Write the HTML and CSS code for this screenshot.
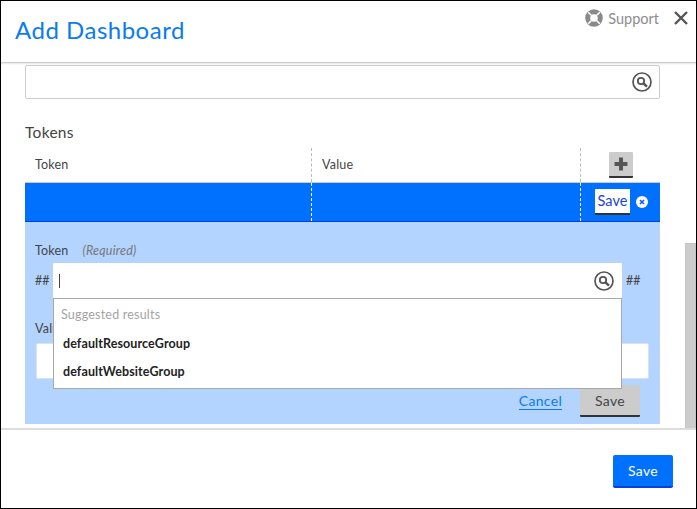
FILE: index.html
```html
<!DOCTYPE html>
<html lang="en">
<head>
<meta charset="utf-8">
<title>Add Dashboard</title>
<link rel="stylesheet" href="styles.css">
</head>
<body>
<div class="dialog">
  <header class="head">
    <h1 class="title">Add Dashboard</h1>
    <div class="head-tools">
      <svg class="buoy" viewBox="0 0 18 18" width="18" height="18" aria-hidden="true">
        <circle cx="9" cy="9" r="6.3" fill="none" stroke="#8a8a8a" stroke-width="5"/>
        <path d="M3.2 3.2 6.2 6.2M14.8 3.2 11.8 6.2M3.2 14.8 6.2 11.8M14.8 14.8 11.8 11.8" stroke="#fff" stroke-width="1.6"/>
      </svg>
      <span class="support">Support</span>
      <svg class="close" viewBox="0 0 16 16" width="16" height="16" aria-hidden="true">
        <path d="M2 2 14 14M14 2 2 14" stroke="#555" stroke-width="2.4" fill="none"/>
      </svg>
    </div>
  </header>

  <main class="body">
    <div class="scrollbar"></div>
    <div class="search-box">
      <svg class="search" viewBox="0 0 20 20" width="20" height="20" aria-hidden="true">
        <circle cx="10" cy="10" r="9" fill="none" stroke="#555" stroke-width="1.7"/>
        <circle cx="9" cy="9" r="3.2" fill="none" stroke="#555" stroke-width="1.8"/>
        <path d="M11.5 11.5 15 14.6" stroke="#555" stroke-width="2.4" fill="none"/>
      </svg>
    </div>
    <h2 class="section">Tokens</h2>
    <div class="table-head">
      <div class="cell cell-token">Token</div>
      <div class="cell cell-value">Value</div>
      <div class="cell cell-add">
        <button class="add-btn" type="button" aria-label="Add">
          <svg viewBox="0 0 12 12" width="14" height="14" aria-hidden="true"><path d="M6 0.5V11.5M0.5 6H11.5" stroke="#555" stroke-width="3.4"/></svg>
        </button>
      </div>
    </div>
    <div class="table-row">
      <div class="cell cell-token"></div>
      <div class="cell cell-value"></div>
      <div class="cell cell-actions">
        <button class="row-save" type="button">Save</button>
        <svg class="row-x" viewBox="0 0 12 12" width="12" height="12" aria-hidden="true">
          <circle cx="6" cy="6" r="6" fill="#fff"/>
          <path d="M4 4 8 8M8 4 4 8" stroke="#1a5ae8" stroke-width="1.6"/>
        </svg>
      </div>
    </div>
    <section class="panel">
      <div class="label-line"><span class="label">Token</span><em class="req">(Required)</em></div>
      <div class="token-line">
        <span class="hash">##</span>
        <div class="token-input">
          <span class="caret"></span>
          <svg class="search" viewBox="0 0 20 20" width="20" height="20" aria-hidden="true">
            <circle cx="10" cy="10" r="9" fill="none" stroke="#555" stroke-width="1.7"/>
            <circle cx="9" cy="9" r="3.2" fill="none" stroke="#555" stroke-width="1.8"/>
            <path d="M11.5 11.5 15 14.6" stroke="#555" stroke-width="2.4" fill="none"/>
          </svg>
          <div class="dropdown">
            <div class="drop-head">Suggested results</div>
            <div class="drop-item">defaultResourceGroup</div>
            <div class="drop-item">defaultWebsiteGroup</div>
          </div>
        </div>
        <span class="hash">##</span>
      </div>
      <div class="label label-value">Value</div>
      <div class="value-input"></div>
      <div class="panel-actions">
        <a class="cancel" href="#">Cancel</a>
        <button class="panel-save" type="button">Save</button>
      </div>
    </section>
  </main>

  <footer class="foot">
    <button class="foot-save" type="button">Save</button>
  </footer>
</div>
</body>
</html>
```
FILE: styles.css
```css
* { box-sizing: border-box; }
html, body { margin: 0; height: 100%; }
body { font-family: Lato, "Open Sans", sans-serif; color: #444; background: #fff; overflow: hidden; }
.dialog { width: 697px; height: 509px; border: 1px solid #000; display: flex; flex-direction: column; background: #fff; }

.head { height: 62px; flex: none; display: flex; justify-content: space-between; align-items: flex-start; border-bottom: 1px solid #ccc; padding-left: 14px; }
.title { margin: 14px 0 0; font-size: 24px; line-height: 30px; font-weight: 400; color: #0a7bf0; letter-spacing: .5px; }
.head-tools { display: flex; align-items: center; height: 18px; margin-top: 8px; padding-right: 7px; }
.support { font-size: 14.5px; color: #8c8c8c; margin: 0 14px 0 5px; letter-spacing: 0; }
.close { display: block; }

.body { position: relative; height: 365px; flex: none; overflow: hidden; padding: 2px 36px 0 24px; box-shadow: inset 0 3px 2px -2px #e4e4e4; }
.scrollbar { position: absolute; right: 0; top: 180px; width: 11px; height: 186px; background: #ccc; border: 1px solid #c4c4c4; }
.search-box { height: 34px; border: 1px solid #ccc; border-radius: 2px; display: flex; align-items: center; justify-content: flex-end; padding-right: 7px; background: #fff; }
.search { display: block; flex: none; }
.section { margin: 23px 0 0; font-size: 15.5px; line-height: 20px; font-weight: 400; color: #444; letter-spacing: .3px; height: 26px; }

.table-head, .table-row { display: grid; grid-template-columns: 287px 269px 79px; }
.table-head { height: 35px; font-size: 12.5px; border-bottom: 1px solid #ccc; }
.cell-token, .cell-value { border-right: 1px dashed #bbb; }
.table-head .cell-token, .table-head .cell-value { padding: 9px 10px 0; line-height: 16px; color: #444; letter-spacing: .2px; }
.cell-add { display: flex; justify-content: center; padding-left: 1px; padding-top: 4px; }
.add-btn { width: 24px; height: 26px; padding: 0; border: 0; border-bottom: 2px solid #333; border-radius: 1px; background: #ccc; display: flex; align-items: center; justify-content: center; }
.table-row { height: 39px; background: #0070ff; border-bottom: 1px solid #0a3fd8; }
.table-row .cell-token, .table-row .cell-value { border-right-color: #fff; }
.cell-actions { display: flex; align-items: center; padding: 0 0 0 14px; gap: 6px; }
.row-save { width: 35px; height: 26px; padding: 0 0 2px; border: 0; border-bottom: 2px solid #333; background: #fff; color: #1a44e0; font: 14.5px Lato, sans-serif; }
.row-x { display: block; }

.panel { height: 202px; background: #b3d4ff; padding: 21px 11px 0; }
.label-line { display: flex; align-items: baseline; height: 20px; margin-left: -1px; font-size: 12.5px; line-height: 16px; }
.label { font-size: 12.5px; color: #444; letter-spacing: .2px; }
.req { font-size: 12.5px; color: #777; margin-left: 14px; letter-spacing: .2px; }
.token-line { display: flex; align-items: center; height: 35px; margin-left: -1px; }
.hash { font-size: 12.5px; color: #444; width: 18px; flex: none; }
.token-line .hash:last-child { margin-left: 4px; }
.token-input { position: relative; width: 569px; height: 35px; background: #fff; border-radius: 1px; box-shadow: 0 0 2px #ccc; display: flex; align-items: center; justify-content: space-between; padding: 0 8px 0 6px; flex: none; }
.caret { width: 1px; height: 14px; background: #444; }
.dropdown { position: absolute; left: 0; top: 35px; width: 569px; height: 91px; background: #fff; border: 1px solid #a8a8a8; padding: 8px 9px 0 9px; z-index: 2; }
.drop-head { font-size: 12.5px; line-height: 16px; color: #a4a4a4; margin-left: -2px; letter-spacing: .2px; }
.drop-item { font-size: 12.5px; line-height: 16px; font-weight: 700; color: #222; margin-top: 12px; letter-spacing: .1px; }
.drop-head + .drop-item { margin-top: 13px; }
.label-value { margin-top: 23px; margin-left: -1px; line-height: 16px; height: 16px; display: block; }
.value-input { width: 613px; height: 36px; margin-top: 6px; background: #fff; border: 1px solid #d5e3f5; border-radius: 2px; }
.panel-actions { display: flex; align-items: center; justify-content: flex-end; gap: 18px; margin-top: 6px; padding-right: 9px; }
.cancel { font-size: 14px; color: #0a7bf0; text-decoration: none; border-bottom: 1px solid #0a7bf0; line-height: 16px; letter-spacing: .3px; }
.panel-save { width: 60px; height: 32px; padding: 0; border: 0; border-bottom: 2px solid #333; border-radius: 1px; background: #ccc; color: #444; font: 14px Lato, sans-serif; letter-spacing: .3px; }

.foot { flex: 1; border-top: 2px solid #ddd; display: flex; justify-content: flex-end; align-items: flex-start; padding: 25px 23px 0 0; }
.foot-save { width: 60px; height: 33px; padding: 0; border: 0; border-bottom: 2px solid #0a3fd8; border-radius: 2px; background: #0070ff; color: #fff; font: 14px Lato, sans-serif; letter-spacing: .3px; }
```
